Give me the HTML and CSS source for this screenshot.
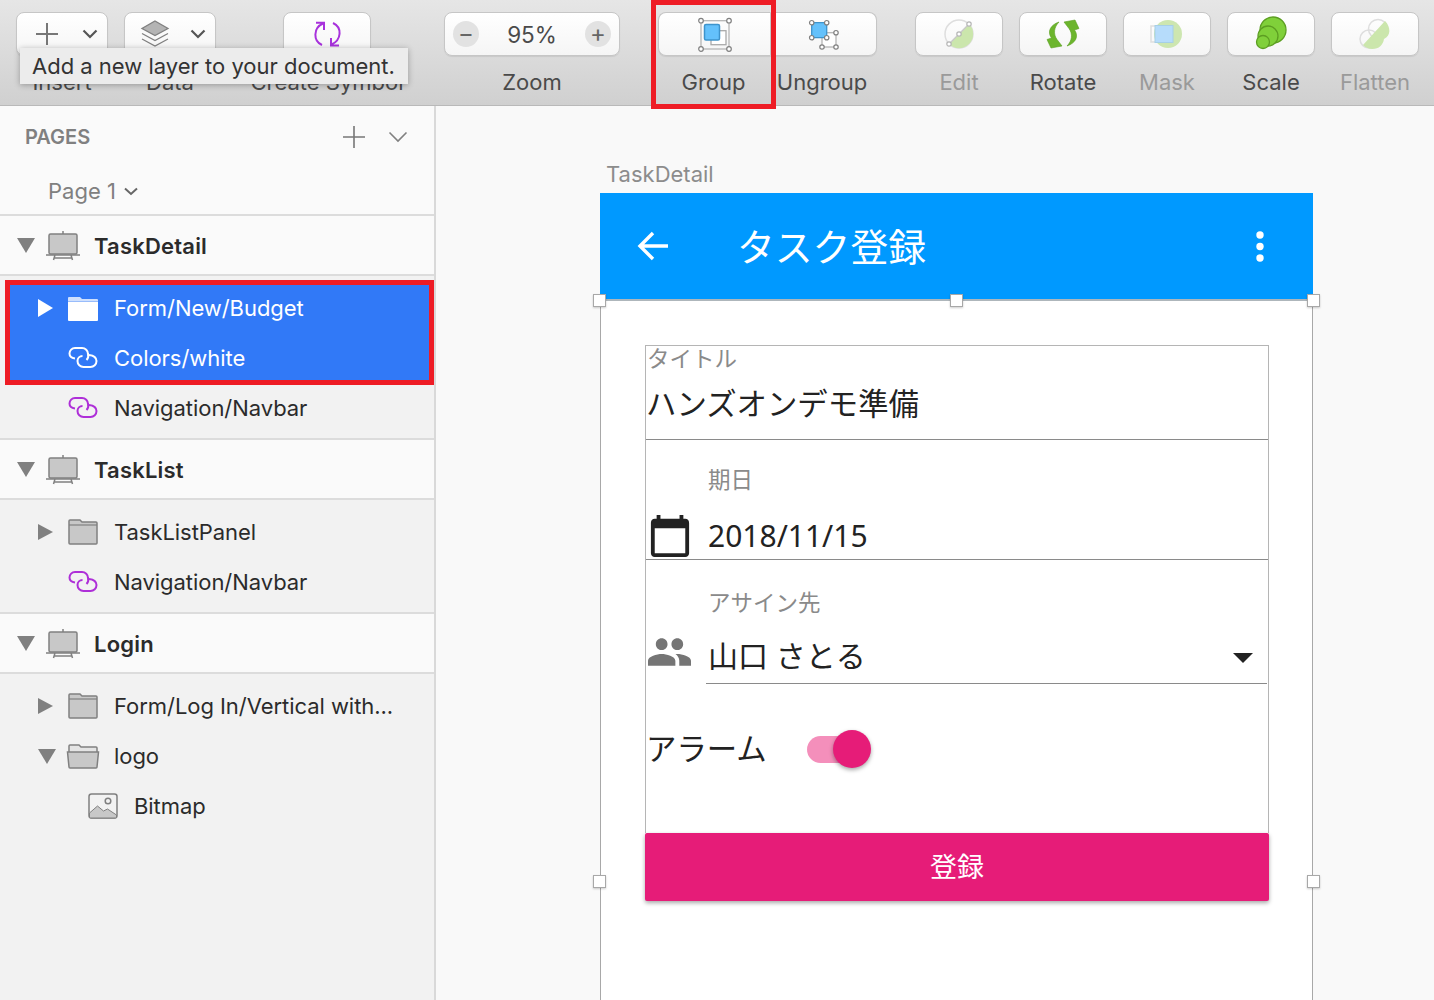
FILE: index.html
```html
<!DOCTYPE html>
<html lang="ja">
<head>
    <meta charset="UTF-8">
    <title>TaskDetail</title>
    <link rel="stylesheet" href="styles.css">
</head>
<body>
    <svg class="defs" width="0" height="0">
        <symbol id="artboard" viewBox="0 0 34 30">
            <path d="M17 0v3" stroke="#808080" stroke-width="1.5"/>
            <rect x="3" y="3" width="28" height="20" rx="1.5" fill="#c8c8c8" stroke="#808080" stroke-width="1.5"/>
            <path d="M0 24h34M9 24l-1.5 5M25 24l1.5 5M8 27h18" fill="none" stroke="#808080" stroke-width="1.5"/>
        </symbol>
        <symbol id="folder" viewBox="0 0 30 26">
            <path d="M1 4v20a1 1 0 0 0 1 1h26a1 1 0 0 0 1-1V4a1 1 0 0 0-1-1H14l-2-2H2a1 1 0 0 0-1 1z" fill="#c8c8c8" stroke="#808080" stroke-width="1.5"/>
            <path d="M1 6h28" stroke="#808080" stroke-width="1.2"/>
        </symbol>
        <symbol id="folder-open" viewBox="0 0 34 26">
            <path d="M3 10V3a1 1 0 0 1 1-1h9l2 2h15a1 1 0 0 1 1 1v5" fill="#e4e4e4" stroke="#808080" stroke-width="1.5"/>
            <path d="M1.5 9h31l-1.5 15a1 1 0 0 1-1 1H4a1 1 0 0 1-1-1z" fill="#c8c8c8" stroke="#808080" stroke-width="1.5"/>
        </symbol>
        <symbol id="folder-white" viewBox="0 0 30 26">
            <path d="M0 3a1 1 0 0 1 1-1h11l2 2h15a1 1 0 0 1 1 1v1H0z" fill="#cfe0fd"/>
            <path d="M0 6.500h30V25a1 1 0 0 1-1 1H1a1 1 0 0 1-1-1z" fill="#fff"/>
        </symbol>
        <symbol id="link" viewBox="0 0 30 24">
            <path d="M7 12.500C3.500 12 1.500 10 1.500 7.500A5.500 5.500 0 0 1 7 2h7a6 6 0 0 1 6 6 6 6 0 0 1-1.500 6" fill="none" stroke="currentColor" stroke-width="2"/>
            <path d="M21 9c4 .5 7.500 2 7.500 6a6 6 0 0 1-6 6h-7a6 6 0 0 1-6-6 5 5 0 0 1 5-5" fill="none" stroke="currentColor" stroke-width="2"/>
        </symbol>
        <symbol id="bitmap" viewBox="0 0 30 26">
            <rect x="1" y="1" width="28" height="24" rx="2.500" fill="#f2f2f2" stroke="#808080" stroke-width="1.5"/>
            <path d="M1.500 20l8-7 6 5 4-2 9 6v2a1 1 0 0 1-1 1h-25a1 1 0 0 1-1-1z" fill="#c8c8c8" stroke="#808080" stroke-width="1"/>
            <circle cx="20" cy="8" r="2.800" fill="none" stroke="#808080" stroke-width="1.5"/>
        </symbol>
    </svg>

    <header class="toolbar">
        <div class="tool">
            <div class="tool-btn tool-btn-split">
                <svg width="24" height="24" viewBox="0 0 24 24"><path d="M12 1v22M1 12h22" stroke="#777" stroke-width="2"/></svg>
                <svg class="chev chev-insert" width="16" height="10" viewBox="0 0 16 10"><path d="M1.500 1.500L8 8l6.500-6.500" fill="none" stroke="#555" stroke-width="2.200"/></svg>
            </div>
            <span class="tool-label">Insert</span>
        </div>
        <div class="tool">
            <div class="tool-btn tool-btn-split tool-btn-data">
                <svg width="30" height="28" viewBox="0 0 30 28"><path d="M15 1l13 7.500-13 7-13-7z" fill="#b4b4b4" stroke="#808080" stroke-width="1.300"/><path d="M2 13.500l13 7 13-7M2 19l13 7 13-7" fill="none" stroke="#808080" stroke-width="1.300"/></svg>
                <svg class="chev chev-data" width="16" height="10" viewBox="0 0 16 10"><path d="M1.500 1.500L8 8l6.500-6.500" fill="none" stroke="#555" stroke-width="2.200"/></svg>
            </div>
            <span class="tool-label">Data</span>
        </div>
        <div class="tool tool-symbol">
            <div class="tool-btn">
                <svg width="30" height="30" viewBox="0 0 30 30"><path d="M4 3.700h8V11M11 4.500C1 9 1 22 10 26M19 19v7.500h8M21 4c9.500 4.500 8.500 17-1.500 21.500" fill="none" stroke="#a832dc" stroke-width="2"/></svg>
            </div>
            <span class="tool-label">Create Symbol</span>
        </div>
        <div class="tool tool-zoom">
            <div class="tool-btn zoom-btn">
                <span class="zoom-circle">−</span>
                <span class="zoom-value">95%</span>
                <span class="zoom-circle">+</span>
            </div>
            <span class="tool-label">Zoom</span>
        </div>
        <div class="tool tool-group">
            <div class="tool-btn btn-left">
                <svg width="40" height="40" viewBox="0 0 40 40">
                    <rect x="6" y="6.700" width="28" height="28.300" fill="none" stroke="#b5b5b5" stroke-width="1.300"/>
                    <rect x="16" y="16.700" width="15" height="14" fill="#fff" stroke="#aaa" stroke-width="1.300"/>
                    <rect x="9.500" y="10.500" width="15" height="15.500" rx="1.500" fill="#64c1fb" stroke="#3e94cc" stroke-width="1.500"/>
                    <g fill="#fff" stroke="#808080" stroke-width="1.200"><circle cx="6" cy="6.700" r="2.300"/><circle cx="34" cy="6.700" r="2.300"/><circle cx="6" cy="35" r="2.300"/><circle cx="34" cy="35" r="2.300"/></g>
                </svg>
            </div>
            <span class="tool-label">Group</span>
        </div>
        <div class="tool tool-ungroup">
            <div class="tool-btn btn-right">
                <svg width="40" height="40" viewBox="0 0 40 40">
                    <rect x="18" y="18.700" width="14" height="14.300" fill="#fff" stroke="#b5b5b5" stroke-width="1.300"/>
                    <rect x="7.700" y="8.700" width="15" height="15" rx="1" fill="#64c1fb" stroke="#3e94cc" stroke-width="1.300"/>
                    <g fill="#fff" stroke="#808080" stroke-width="1.200"><circle cx="7.700" cy="8.700" r="2.200"/><circle cx="22.700" cy="8.700" r="2.200"/><circle cx="7.700" cy="23.700" r="2.200"/><circle cx="22.700" cy="23.700" r="2.200"/><circle cx="32" cy="18.700" r="2.200"/><circle cx="18" cy="33" r="2.200"/><circle cx="32" cy="33" r="2.200"/></g>
                </svg>
            </div>
            <span class="tool-label">Ungroup</span>
        </div>
        <div class="tool tool-edit">
            <div class="tool-btn">
                <svg width="36" height="36" viewBox="0 0 36 36">
                    <circle cx="18" cy="18" r="14" fill="none" stroke="#dedede" stroke-width="1.500"/>
                    <path d="M28 8A14 14 0 0 1 8 28z" fill="#cbe6ac"/>
                    <path d="M8 28L28 8" stroke="#c8c8c8" stroke-width="1.300"/>
                    <g fill="#fff" stroke="#b5b5b5" stroke-width="1.200"><circle cx="8" cy="28" r="2.200"/><circle cx="18" cy="18" r="2.200"/><circle cx="28" cy="8" r="2.200"/></g>
                </svg>
            </div>
            <span class="tool-label tool-label-off">Edit</span>
        </div>
        <div class="tool">
            <div class="tool-btn">
                <svg width="36" height="36" viewBox="0 0 36 36" fill="#6cb52d" stroke="#5aa022" stroke-width=".6">
                    <path d="M14 6C5 9 2 16 6.500 22L2 23.500 6 32l11-2-5-6.500C8 18 9 11 14 6z"/>
                    <path d="M14 6C5 9 2 16 6.500 22L2 23.500 6 32l11-2-5-6.500C8 18 9 11 14 6z" transform="rotate(180 18 18)"/>
                </svg>
            </div>
            <span class="tool-label">Rotate</span>
        </div>
        <div class="tool">
            <div class="tool-btn">
                <svg width="36" height="36" viewBox="0 0 36 36">
                    <rect x="2" y="10" width="18" height="16" fill="none" stroke="#dedede" stroke-width="1.500"/>
                    <circle cx="19" cy="18" r="14" fill="#cde6b0"/>
                    <rect x="6" y="9.500" width="18" height="17" fill="#b6dcfb" stroke="#a6cfe6" stroke-width="1"/>
                </svg>
            </div>
            <span class="tool-label tool-label-off">Mask</span>
        </div>
        <div class="tool">
            <div class="tool-btn">
                <svg width="36" height="36" viewBox="0 0 36 36" fill="#80d03a" stroke="#5c9e22" stroke-width="1.300">
                    <circle cx="20" cy="14" r="13"/>
                    <circle cx="15" cy="20" r="10"/>
                    <circle cx="10" cy="26" r="6.500"/>
                </svg>
            </div>
            <span class="tool-label">Scale</span>
        </div>
        <div class="tool">
            <div class="tool-btn">
                <svg width="36" height="36" viewBox="0 0 36 36">
                    <circle cx="12" cy="23" r="9" fill="none" stroke="#dedede" stroke-width="1.500"/>
                    <circle cx="21" cy="13" r="9.500" fill="none" stroke="#dedede" stroke-width="1.500"/>
                    <path d="M6 29L28 5c6 6 6 15-1 18-1 6-5 10-11.500 10C11 33 8 31 6 29z" fill="#cbe6ac"/>
                </svg>
            </div>
            <span class="tool-label tool-label-off">Flatten</span>
        </div>

        <div class="tooltip">Add a new layer to your document.</div>
        <div class="mark-group"></div>
    </header>

    <main class="main">
        <aside class="sidebar">
            <div class="pages">
                <div class="pages-head">
                    <span class="pages-title">PAGES</span>
                    <svg class="pages-plus" width="24" height="24" viewBox="0 0 24 24"><path d="M12 1v22M1 12h22" stroke="#777" stroke-width="1.600"/></svg>
                    <svg class="pages-chev" width="20" height="12" viewBox="0 0 20 12"><path d="M1.500 1.500L10 10l8.500-8.500" fill="none" stroke="#808080" stroke-width="1.600"/></svg>
                </div>
                <div class="page-current">
                    <span>Page 1</span>
                    <svg width="14" height="9" viewBox="0 0 14 9"><path d="M1 1.500L7 7l6-5.500" fill="none" stroke="#666" stroke-width="2"/></svg>
                </div>
            </div>

            <div class="board">
                <span class="arrow-down"></span>
                <svg class="board-icon"><use href="#artboard"/></svg>
                <span>TaskDetail</span>
            </div>
            <div class="layers">
                <div class="selected">
                    <div class="layer">
                        <span class="arrow-right arrow-white"></span>
                        <svg class="layer-icon"><use href="#folder-white"/></svg>
                        <span>Form/New/Budget</span>
                    </div>
                    <div class="layer layer-plain">
                        <svg class="layer-icon link-white"><use href="#link"/></svg>
                        <span>Colors/white</span>
                    </div>
                </div>
                <div class="layer layer-plain">
                    <svg class="layer-icon link-purple"><use href="#link"/></svg>
                    <span>Navigation/Navbar</span>
                </div>
            </div>

            <div class="board">
                <span class="arrow-down"></span>
                <svg class="board-icon"><use href="#artboard"/></svg>
                <span>TaskList</span>
            </div>
            <div class="layers">
                <div class="layer">
                    <span class="arrow-right"></span>
                    <svg class="layer-icon"><use href="#folder"/></svg>
                    <span>TaskListPanel</span>
                </div>
                <div class="layer layer-plain">
                    <svg class="layer-icon link-purple"><use href="#link"/></svg>
                    <span>Navigation/Navbar</span>
                </div>
            </div>

            <div class="board">
                <span class="arrow-down"></span>
                <svg class="board-icon"><use href="#artboard"/></svg>
                <span>Login</span>
            </div>
            <div class="layers layers-last">
                <div class="layer">
                    <span class="arrow-right"></span>
                    <svg class="layer-icon"><use href="#folder"/></svg>
                    <span>Form/Log In/Vertical with...</span>
                </div>
                <div class="layer">
                    <span class="arrow-open"></span>
                    <svg class="layer-icon layer-icon-open"><use href="#folder-open"/></svg>
                    <span>logo</span>
                </div>
                <div class="layer layer-child">
                    <svg class="layer-icon"><use href="#bitmap"/></svg>
                    <span>Bitmap</span>
                </div>
            </div>
        </aside>

        <section class="canvas">
            <div class="artboard-name">TaskDetail</div>
            <div class="artboard">
                <div class="app-bar">
                    <svg class="app-back" width="31" height="30" viewBox="0 0 31 30"><path d="M16 2L3 15l13 13M3 15h28" fill="none" stroke="#fff" stroke-width="3.400"/></svg>
                    <span class="app-title">タスク登録</span>
                    <svg class="app-more" width="8" height="31" viewBox="0 0 8 31" fill="#fff"><circle cx="4" cy="4" r="3.700"/><circle cx="4" cy="15.500" r="3.700"/><circle cx="4" cy="27" r="3.700"/></svg>
                </div>
                <div class="app-body">
                    <div class="form">
                        <div class="field field-title">
                            <div class="field-label">タイトル</div>
                            <div class="field-value field-value-wide">ハンズオンデモ準備</div>
                        </div>
                        <div class="field field-date">
                            <div class="field-label field-label-indent">期日</div>
                            <div class="field-row">
                                <svg class="icon-date" width="40" height="42" viewBox="2 1 20 22"><path fill="#222" d="M20 3h-1V1h-2v2H7V1H5v2H4c-1.100 0-2 .9-2 2v16c0 1.100.9 2 2 2h16c1.100 0 2-.9 2-2V5c0-1.100-.9-2-2-2zm0 18H4V8h16v13z"/></svg>
                                <div class="field-value">2018/11/15</div>
                            </div>
                        </div>
                        <div class="field-assign">
                            <div class="field-label field-label-indent">アサイン先</div>
                            <div class="field-row">
                                <svg class="icon-people" width="43" height="28" viewBox="1 5 22 14"><path fill="#757575" d="M16 11c1.660 0 2.990-1.340 2.990-3S17.660 5 16 5c-1.660 0-3 1.340-3 3s1.340 3 3 3zm-8 0c1.660 0 2.990-1.340 2.990-3S9.660 5 8 5C6.340 5 5 6.340 5 8s1.340 3 3 3zm0 2c-2.330 0-7 1.170-7 3.500V19h14v-2.500c0-2.330-4.670-3.500-7-3.500zm8 0c-.29 0-.62.02-.97.05 1.160.84 1.970 1.970 1.970 3.450V19h6v-2.500c0-2.330-4.670-3.500-7-3.500z"/></svg>
                                <div class="select">
                                    <span class="field-value">山口 さとる</span>
                                    <span class="select-caret"></span>
                                </div>
                            </div>
                        </div>
                        <div class="field-alarm">
                            <span class="alarm-label">アラーム</span>
                            <span class="toggle"><span class="toggle-thumb"></span></span>
                        </div>
                    </div>
                    <div class="submit">登録</div>
                </div>
                <span class="handle handle-tl"></span>
                <span class="handle handle-tc"></span>
                <span class="handle handle-tr"></span>
                <span class="handle handle-bl"></span>
                <span class="handle handle-br"></span>
            </div>
        </section>
    </main>
</body>
</html>
```

FILE: styles.css
```css
* {
    box-sizing: border-box;
}
body {
    margin: 0;
    height: 100vh;
    overflow: hidden;
    display: flex;
    flex-direction: column;
    font-family: "Inter", "Noto Sans CJK JP", sans-serif;
    color: #2b2b2b;
    background-color: #f9f9f9;
}
.defs {
    position: absolute;
}

/* toolbar */
.toolbar {
    position: relative;
    z-index: 2;
    flex: none;
    height: 106px;
    display: flex;
    gap: 16px;
    padding: 12px 0 0 16px;
    background: linear-gradient(#e6e6e6, #d0d0d0);
    border-bottom: 1px solid #b9b9b9;
}
.tool {
    width: 88px;
    display: flex;
    flex-direction: column;
    align-items: center;
}
.tool:nth-child(-n+2) {
    width: 92px;
}
.tool-symbol {
    margin-left: 51px;
}
.tool-zoom {
    width: 176px;
    margin-left: 57px;
}
.tool-group {
    width: 113px;
    margin-left: 22px;
}
.tool-group .tool-label {
    margin-right: 2px;
}
.tool-ungroup {
    width: 106px;
    margin-left: -16px;
}
.tool-ungroup .tool-label {
    margin-right: 4px;
}
.tool-edit {
    margin-left: 22px;
}
.tool-btn {
    width: 100%;
    height: 44px;
    display: flex;
    align-items: center;
    justify-content: center;
    background: linear-gradient(#fff, #f5f5f5);
    border: 1px solid #c6c6c6;
    border-radius: 8px;
    box-shadow: 0 1px 1px rgba(0, 0, 0, 0.08);
}
.tool-btn-split {
    justify-content: flex-start;
    padding-left: 18px;
}
.tool-btn-data {
    padding-left: 15px;
}
.chev-insert {
    margin-left: 23px;
}
.chev-data {
    margin-left: 20px;
}
.btn-left {
    border-radius: 8px 0 0 8px;
    border-right: 1px solid #c9c9c9;
}
.btn-right {
    border-radius: 0 8px 8px 0;
    border-left: 0;
}
.tool-label {
    margin-top: 13px;
    font-size: 22px;
    line-height: 26px;
    color: #4a4a4a;
    white-space: nowrap;
}
.tool-label-off {
    color: #9a9a9a;
}
.zoom-btn {
    justify-content: space-between;
    padding: 0 8px;
}
.zoom-circle {
    width: 26px;
    height: 26px;
    border-radius: 50%;
    background-color: #e2e2e2;
    color: #666;
    font-size: 24px;
    line-height: 25px;
    text-align: center;
}
.zoom-value {
    font-size: 22.500px;
    color: #4a4a4a;
}
.tooltip {
    position: absolute;
    left: 20px;
    top: 48px;
    width: 388px;
    height: 36px;
    padding-left: 12px;
    font-size: 22px;
    line-height: 36px;
    white-space: nowrap;
    color: #333;
    background-color: #ececec;
    box-shadow: 0 1px 6px rgba(0, 0, 0, 0.3);
}
.mark-group {
    position: absolute;
    left: 651px;
    top: 0;
    width: 125px;
    height: 109px;
    border: 5px solid #ee1c25;
}

/* layer list */
.main {
    flex: 1;
    min-height: 0;
    display: flex;
}
.sidebar {
    flex: none;
    width: 436px;
    display: flex;
    flex-direction: column;
    background-color: #fafafa;
    border-right: 2px solid #d9d9d9;
    font-size: 22px;
}
.pages {
    height: 110px;
    border-bottom: 2px solid #dcdcdc;
}
.pages-head {
    height: 60px;
    display: flex;
    align-items: center;
    padding: 2px 0 0 25px;
}
.pages-title {
    flex: 1;
    font-size: 20px;
    font-weight: 600;
    color: #808080;
}
.pages-plus {
    margin-right: 22px;
}
.pages-chev {
    margin-right: 26px;
}
.page-current {
    display: flex;
    align-items: center;
    gap: 8px;
    padding: 2px 0 0 48px;
    height: 48px;
    color: #808080;
}
.board {
    height: 60px;
    display: flex;
    align-items: center;
    padding: 1px 0 0 17px;
    font-weight: 600;
    letter-spacing: 0.2px;
    background-color: #fafafa;
    border-bottom: 2px solid #dcdcdc;
}
.board-icon {
    width: 34px;
    height: 30px;
    margin: 0 14px 0 11px;
}
.arrow-down {
    width: 0;
    height: 0;
    border-left: 9px solid transparent;
    border-right: 9px solid transparent;
    border-top: 15px solid #808080;
}
.layers {
    padding: 7px 0 5px;
    background-color: #f2f2f2;
    border-bottom: 2px solid #dcdcdc;
}
.layers-last {
    flex: 1;
    border-bottom: 0;
}
.layer {
    height: 50px;
    display: flex;
    align-items: center;
    padding-left: 38px;
    letter-spacing: -0.05px;
    white-space: nowrap;
}
.layer-plain {
    padding-left: 68px;
}
.layer-child {
    padding-left: 88px;
}
.layer-icon {
    flex: none;
    width: 30px;
    height: 26px;
    margin-right: 16px;
}
.layer-icon-open {
    width: 34px;
    margin: 0 14px 0 -2px;
}
.arrow-right {
    flex: none;
    width: 0;
    height: 0;
    margin-right: 15px;
    border-top: 8px solid transparent;
    border-bottom: 8px solid transparent;
    border-left: 15px solid #808080;
}
.arrow-white {
    border-top-width: 9px;
    border-bottom-width: 9px;
    border-left-color: #fff;
}
.arrow-open {
    flex: none;
    width: 0;
    height: 0;
    margin-right: 12px;
    border-left: 9px solid transparent;
    border-right: 9px solid transparent;
    border-top: 15px solid #808080;
}
.link-purple {
    color: #ae2fd8;
}
.link-white {
    color: #fff;
}
.selected {
    margin: -3px 0 -2px 5px;
    border: 5px solid #ee1c25;
    background-color: #3179f7;
    color: #fff;
}
.selected .layer:first-child {
    margin-top: -2px;
    padding-left: 28px;
}
.selected .layer:last-child {
    margin-bottom: -3px;
    padding-left: 58px;
}

/* canvas */
.canvas {
    flex: 1;
    min-width: 0;
    display: flex;
    flex-direction: column;
    padding: 55px 0 0 163.500px;
}
.artboard-name {
    margin: 0 0 6px 6.500px;
    font-size: 22px;
    line-height: 26px;
    color: #8c8c8c;
}
.artboard {
    position: relative;
    flex: 1;
    width: 713.500px;
    display: flex;
    flex-direction: column;
    font-family: "Noto Sans", "Noto Sans CJK JP", sans-serif;
}
.app-bar {
    flex: none;
    height: 108px;
    display: flex;
    align-items: center;
    padding-left: 37.500px;
    color: #fff;
    background-color: #0099ff;
    border-bottom: 2px solid #aeb6bb;
}
.app-title {
    flex: 1;
    margin-left: 69px;
    padding-top: 2px;
    font-size: 37.800px;
    line-height: 50px;
}
.app-more {
    margin-right: 49px;
}
.app-body {
    flex: 1;
    padding: 44px 43px 0 44.500px;
    background-color: #fff;
    border-left: 1px solid #a8a8a8;
    border-right: 1px solid #a8a8a8;
}
.form {
    border: 1px solid #b5b5b5;
    border-bottom: 0;
    color: #222;
}
.field {
    border-bottom: 1px solid #8a8a8a;
}
.field-title {
    height: 94px;
    padding: 1px 0 0;
}
.field-date {
    height: 120px;
    padding-top: 28px;
}
.field-assign {
    height: 124px;
    padding-top: 31px;
}
.field-label {
    font-size: 22.500px;
    line-height: 24px;
    color: #8a8a8a;
}
.field-title .field-label {
    padding-left: 1px;
}
.field-label-indent {
    padding-left: 62px;
}
.field-value {
    font-size: 30px;
    line-height: 40px;
}
.field-value-wide {
    font-size: 30.400px;
}
.field-title .field-value {
    margin-top: 13px;
}
.field-row {
    display: flex;
    align-items: flex-start;
}
.field-date .field-row {
    margin-top: 24px;
}
.field-assign .field-row {
    margin-top: 21px;
}
.icon-date {
    flex: none;
    margin: -1px 18px 0 4px;
}
.icon-people {
    flex: none;
    margin: 2px 15px 0 2px;
}
.select {
    flex: 1;
    display: flex;
    align-items: center;
    justify-content: space-between;
    margin-right: 1px;
    padding: 0 14px 7px 2px;
    border-bottom: 1px solid #8a8a8a;
}
.select-caret {
    width: 0;
    height: 0;
    margin-top: 4px;
    border-left: 10px solid transparent;
    border-right: 10px solid transparent;
    border-top: 10px solid #222;
}
.field-alarm {
    height: 149px;
    display: flex;
    align-items: flex-start;
    padding: 45px 0 0;
}
.alarm-label {
    width: 120px;
    font-size: 30.400px;
    line-height: 40px;
    white-space: nowrap;
}
.toggle {
    position: relative;
    width: 64px;
    height: 27px;
    margin: 7px 0 0 41px;
    background: linear-gradient(#f48fbb, #f48fbb) no-repeat 0 0 / 53px 27px;
    border-radius: 14px;
}
.toggle-thumb {
    position: absolute;
    right: 0;
    top: -6px;
    width: 38px;
    height: 38px;
    border-radius: 50%;
    background-color: #e61c78;
    box-shadow: 0 2px 4px rgba(0, 0, 0, 0.35);
}
.submit {
    height: 68px;
    font-size: 27px;
    line-height: 68px;
    text-align: center;
    color: #fff;
    background-color: #e61c78;
    border-radius: 2px;
    box-shadow: 0 2px 4px rgba(0, 0, 0, 0.35);
}
.handle {
    position: absolute;
    width: 13px;
    height: 13px;
    background-color: #fff;
    border: 1px solid #a8a8a8;
    box-shadow: 0 1px 2px rgba(0, 0, 0, 0.2);
}
.handle-tl { left: -7px; top: 101px; }
.handle-tc { left: 350px; top: 101px; }
.handle-tr { right: -7px; top: 101px; }
.handle-bl { left: -7px; top: 682px; }
.handle-br { right: -7px; top: 682px; }
```
